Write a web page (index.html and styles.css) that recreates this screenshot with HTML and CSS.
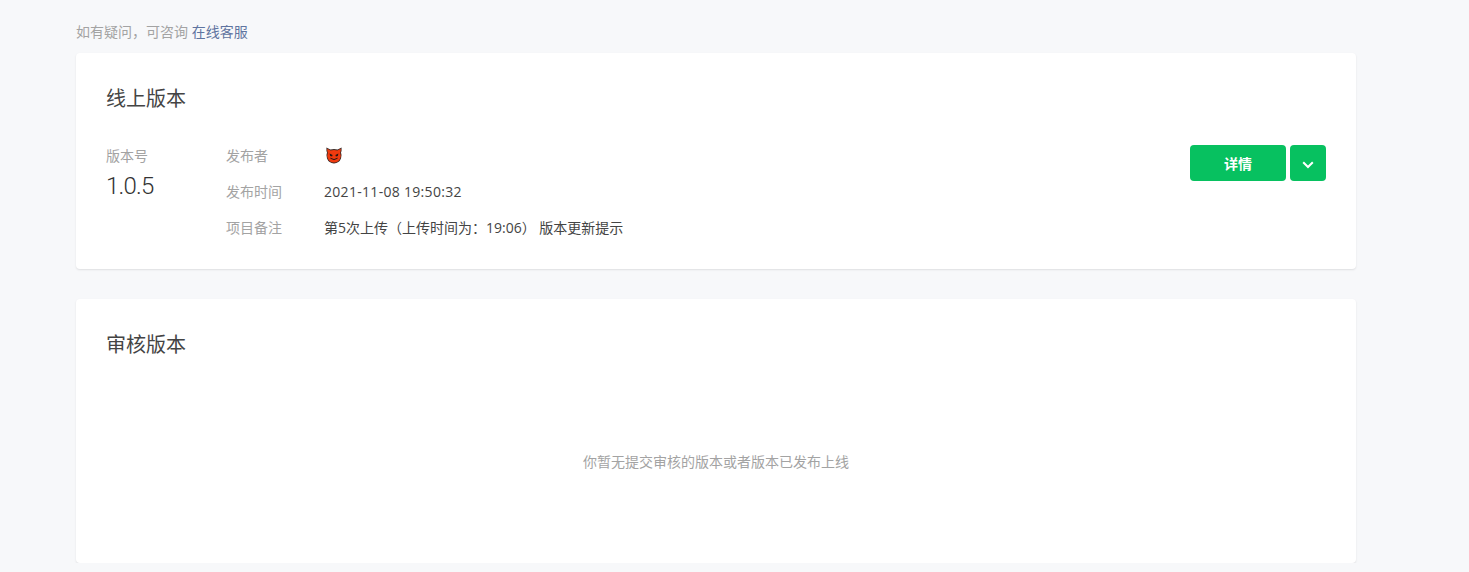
FILE: index.html
```html
<!DOCTYPE html>
<html lang="zh-CN">

<head>
    <meta charset="UTF-8">
    <meta name="viewport" content="width=device-width, initial-scale=1.0">
    <title>版本管理</title>
    <link rel="stylesheet" href="styles.css">
</head>

<body>
    <main class="page">
        <p class="tips">如有疑问，可咨询 <a class="tips-link" href="#">在线客服</a></p>

        <section class="card card-online">
            <h2 class="card-title">线上版本</h2>
            <div class="version">
                <div class="version-no">
                    <div class="version-label">版本号</div>
                    <div class="version-value">1.0.5</div>
                </div>
                <div class="version-info">
                    <div class="info-row">
                        <span class="info-label">发布者</span>
                        <span class="info-value">
                            <svg class="avatar" viewBox="0 0 18 18" width="18" height="18">
                                <path d="M1.4 1.4 L5.4 3.4 Q9 2.4 12.6 3.4 L16.6 1.4 Q16.8 5 16 6.6 Q17.2 9.4 16 12.6 Q14.2 17.4 9 17.4 Q3.8 17.4 2 12.6 Q.8 9.4 2 6.6 Q1.2 5 1.4 1.4 Z" fill="#3a2a26"/>
                                <path d="M2.2 2.8 L5.6 4.4 Q9 3.4 12.4 4.4 L15.8 2.8 Q15.9 5.4 15.1 6.8 Q16.3 9.6 15.2 12.3 Q13.6 16.6 9 16.6 Q4.4 16.6 2.8 12.3 Q1.7 9.6 2.9 6.8 Q2.1 5.4 2.2 2.8 Z" fill="#f03a0e"/>
                                <path d="M4.6 7.6 L7.6 9 L7.1 10.4 L5.2 9.9 Z M13.4 7.6 L10.4 9 L10.9 10.4 L12.8 9.9 Z" fill="#231815"/>
                                <path d="M5.4 12.2 Q9 15 12.6 12.2" fill="none" stroke="#231815" stroke-width="1"/>
                            </svg>
                        </span>
                    </div>
                    <div class="info-row">
                        <span class="info-label">发布时间</span>
                        <span class="info-value info-date">2021-11-08 19:50:32</span>
                    </div>
                    <div class="info-row">
                        <span class="info-label">项目备注</span>
                        <span class="info-value">第5次上传（上传时间为：19:06） 版本更新提示</span>
                    </div>
                </div>
                <div class="version-actions">
                    <button class="btn btn-detail" type="button">详情</button>
                    <button class="btn btn-more" type="button" aria-label="更多">
                        <svg viewBox="0 0 12 8" width="12" height="8">
                            <path d="M1.2 1.2 L6 6 L10.8 1.2" fill="none" stroke="#fff" stroke-width="2"/>
                        </svg>
                    </button>
                </div>
            </div>
        </section>

        <section class="card card-review">
            <h2 class="card-title">审核版本</h2>
            <p class="empty">你暂无提交审核的版本或者版本已发布上线</p>
        </section>
    </main>
</body>

</html>
```

FILE: styles.css
```css
body {
    font-family: "Open Sans", "Noto Sans CJK SC", sans-serif;
    background-color: #f7f8fa;
    color: #444;
    margin: 0;
    padding: 0;
}

.page {
    width: 1280px;
    margin-left: 76px;
}

.tips {
    margin: 0;
    padding-top: 23px;
    height: 30px;
    font-size: 14px;
    line-height: 18px;
    color: #a3a3a3;
}

.tips-link {
    color: #5f74a0;
    text-decoration: none;
}

.card {
    background-color: #fff;
    border-radius: 4px;
    box-shadow: 0 1px 2px rgba(0, 0, 0, 0.1);
    padding: 31px 30px 30px;
    box-sizing: border-box;
}

.card-online {
    height: 216px;
    margin-bottom: 30px;
}

.card-review {
    height: 264px;
}

.card-title {
    margin: 0;
    font-size: 20px;
    font-weight: 400;
    line-height: 30px;
}

.version {
    display: flex;
    margin-top: 30px;
}

.version-no {
    width: 120px;
}

.version-label {
    font-size: 14px;
    line-height: 24px;
    color: #a3a3a3;
}

.version-value {
    font-family: Roboto, sans-serif;
    font-size: 24px;
    font-weight: 300;
    letter-spacing: -0.8px;
    line-height: 36px;
    color: #333;
}

.version-info {
    flex: 1;
}

.info-row {
    display: flex;
    height: 36px;
    font-size: 14px;
    line-height: 24px;
}

.info-label {
    width: 98px;
    color: #a3a3a3;
}

.info-date {
    letter-spacing: 0.3px;
}

.avatar {
    display: block;
    margin-top: 2px;
    margin-left: 1px;
}

.version-actions {
    display: flex;
    gap: 4px;
    margin-top: 1px;
}

.btn {
    height: 36px;
    border: none;
    border-radius: 4px;
    background-color: #07c160;
    color: #fff;
    font-family: inherit;
    font-size: 14px;
    font-weight: 700;
    cursor: pointer;
}

.btn-detail {
    width: 96px;
}

.btn-more {
    width: 36px;
    padding: 0;
}

.empty {
    margin: 90px 0 0;
    text-align: center;
    font-size: 14px;
    line-height: 24px;
    color: #a3a3a3;
}
```
